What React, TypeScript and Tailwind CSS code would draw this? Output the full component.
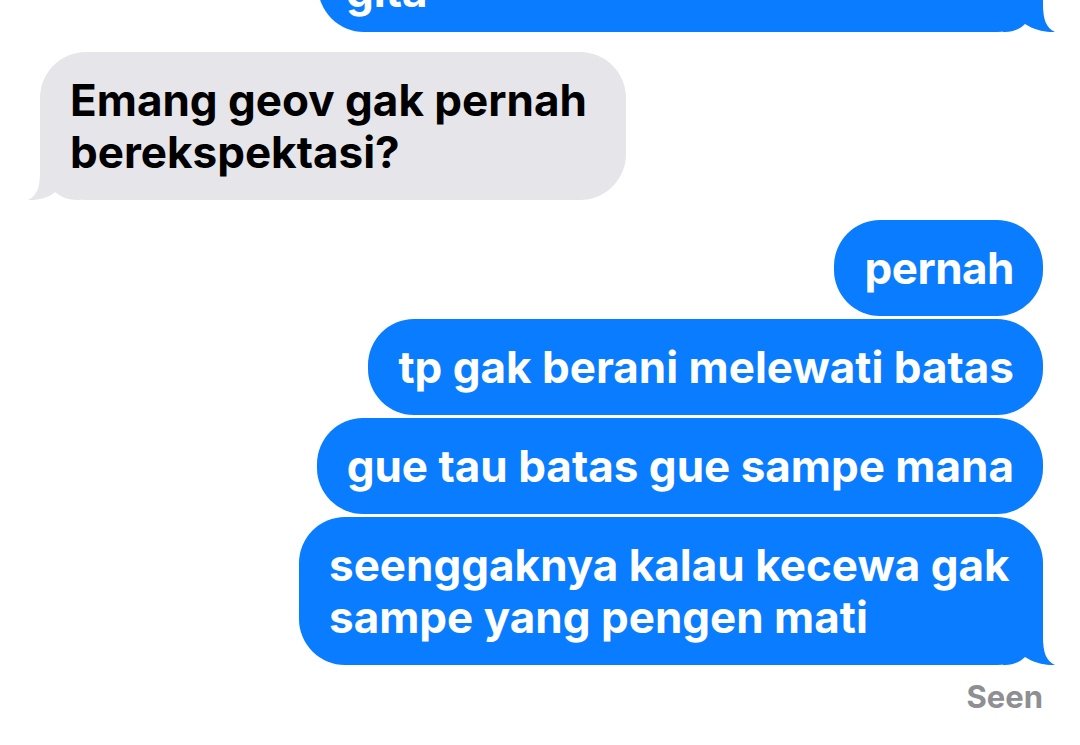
import React from "react";

const BLUE = "#0a7cff";

function SentTail() {
  return (
    <svg
      className="absolute right-[-12px] bottom-0"
      width="52"
      height="50"
      viewBox="0 0 52 50"
    >
      <path
        d="M0 0 H40 V22 C40 37 43 46 52 50 C44 50.5 32 48.5 22 42 C17 47 10 50 2 50 L0 50 Z"
        fill={BLUE}
      />
    </svg>
  );
}

function RecvTail() {
  return (
    <svg
      className="absolute left-[-12px] bottom-0"
      width="52"
      height="50"
      viewBox="0 0 52 50"
    >
      <path
        d="M52 0 H12 V22 C12 37 9 46 0 50 C8 50.5 20 48.5 27 42 C33 47 40 50 50 50 L52 50 Z"
        fill="#e5e5ea"
      />
    </svg>
  );
}

function Sent({
  children,
  tail,
  className = "",
  textClass = "",
}: {
  children: React.ReactNode;
  tail?: boolean;
  className?: string;
  textClass?: string;
}) {
  return (
    <div
      className={
        "relative self-end rounded-[46px] bg-[#0a7cff] py-[22px] text-[44px] leading-[52px] font-bold text-white " +
        className
      }
    >
      <span className={"relative z-10 " + textClass}>{children}</span>
      {tail && <SentTail />}
    </div>
  );
}

export default function App() {
  return (
    <div
      className="relative h-[745px] w-[1080px] overflow-hidden bg-white"
      style={{ fontFamily: "Inter, 'Liberation Sans', Arial, sans-serif" }}
    >
      <div className="flex flex-col pl-[40px] pr-[37px]">
        <Sent tail className="-mt-[64px] w-[725px] pl-[28px] pr-[30px]" textClass="top-[7px]">
          gita
        </Sent>

        <div className="relative mt-[20px] w-[586px] self-start rounded-[46px] bg-[#e5e5ea] px-[30px] py-[22px] text-[44px] leading-[52px] font-bold text-black">
          <span className="relative z-10">
            Emang geov gak pernah
            <br />
            berekspektasi?
          </span>
          <RecvTail />
        </div>

        <Sent className="mt-[20px] pl-[30px] pr-[29px]" textClass="tracking-[-0.5px]">
          pernah
        </Sent>
        <Sent className="mt-[3px] pl-[30px] pr-[29px]">tp gak berani melewati batas</Sent>
        <Sent className="mt-[3px] pl-[30px] pr-[29px]">gue tau batas gue sampe mana</Sent>
        <Sent tail className="mt-[3px] w-[744px] px-[30px]">
          seenggaknya kalau kecewa gak
          <br />
          sampe yang pengen mati
        </Sent>

        <div className="mt-[13px] self-end text-[31px] leading-[37px] font-bold text-[#8e8e93]">
          Seen
        </div>
      </div>
    </div>
  );
}
